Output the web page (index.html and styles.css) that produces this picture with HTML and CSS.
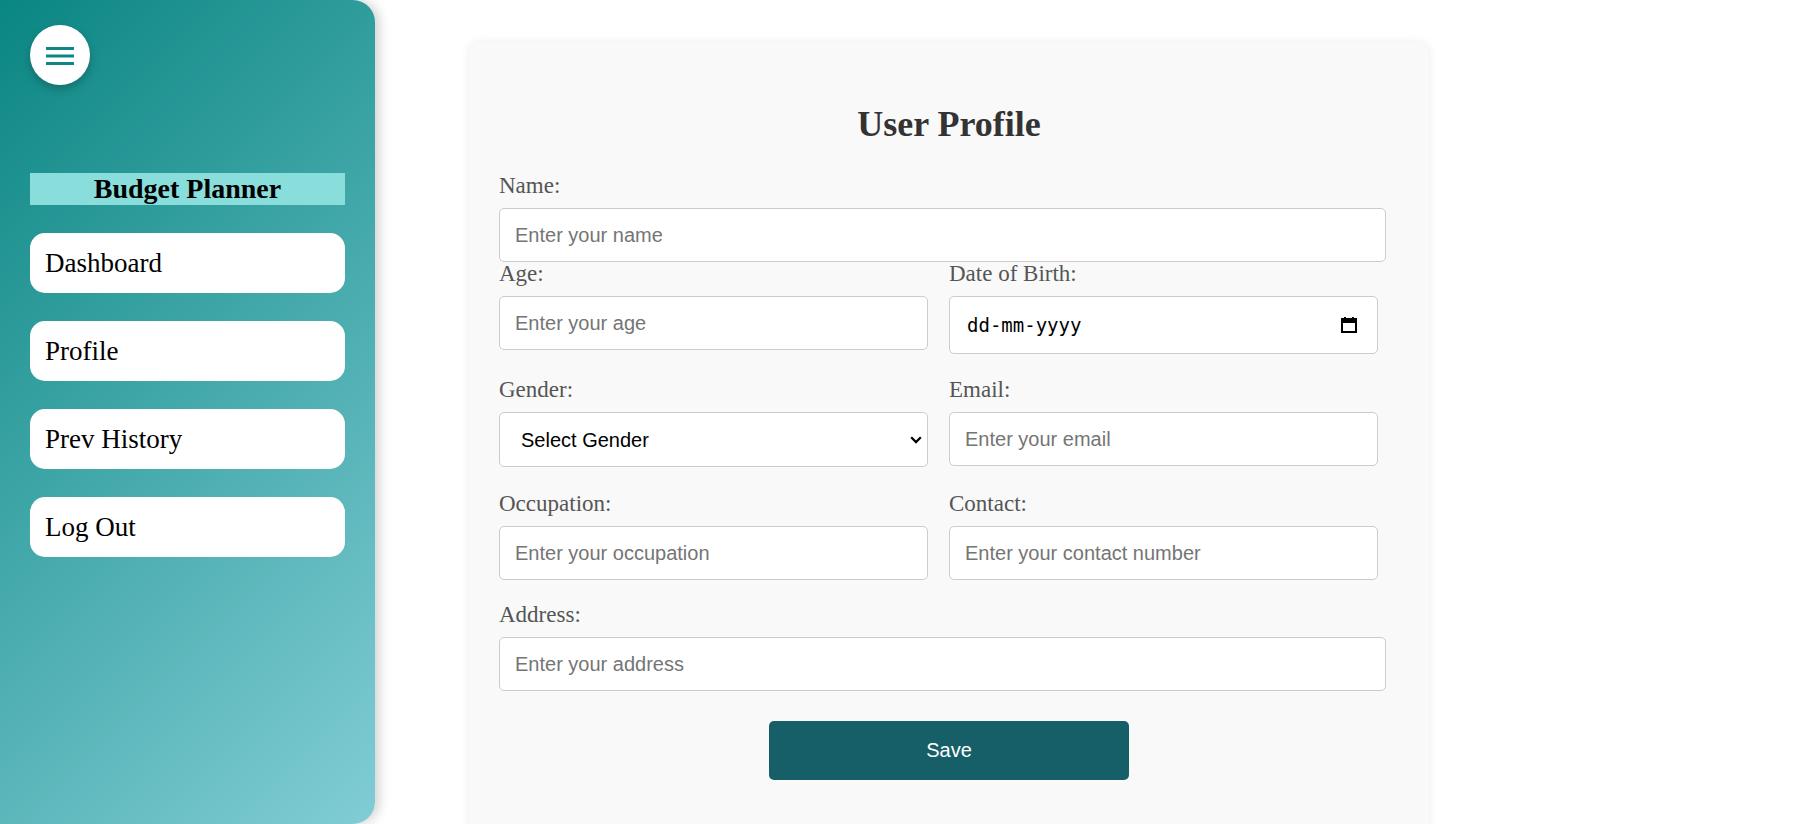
FILE: index.html
```html
<!DOCTYPE html>
<html lang="en">
<head>
<meta charset="utf-8">
<title>User Profile - Budget Planner</title>
<link rel="stylesheet" href="styles.css">
</head>
<body>
<div class="app">
  <aside class="sidebar">
    <button class="menu-btn" type="button" aria-label="Menu">
      <svg width="28" height="18" viewBox="0 0 28 18" aria-hidden="true">
        <rect x="0" y="0" width="28" height="3" fill="#0e8784"/>
        <rect x="0" y="7.5" width="28" height="3" fill="#0e8784"/>
        <rect x="0" y="15" width="28" height="3" fill="#0e8784"/>
      </svg>
    </button>
    <h2 class="brand">Budget Planner</h2>
    <nav class="nav">
      <a class="nav-item" href="#">Dashboard</a>
      <a class="nav-item" href="#">Profile</a>
      <a class="nav-item" href="#">Prev History</a>
      <a class="nav-item" href="#">Log Out</a>
    </nav>
  </aside>
  <main class="main">
    <section class="card">
      <h1 class="title">User Profile</h1>
      <form class="form">
        <div class="group group-name">
          <label class="label" for="name">Name:</label>
          <input class="field field-wide" id="name" type="text" placeholder="Enter your name">
        </div>
        <div class="row row-2">
          <div class="group">
            <label class="label" for="age">Age:</label>
            <input class="field" id="age" type="text" placeholder="Enter your age">
          </div>
          <div class="group">
            <label class="label" for="dob">Date of Birth:</label>
            <div class="control">
              <input class="field field-date" id="dob" type="text" placeholder="dd-mm-yyyy">
              <svg class="cal-icon" width="16" height="17" viewBox="0 0 16 17" aria-hidden="true">
                <rect x="1" y="3" width="14" height="13" fill="none" stroke="#000" stroke-width="2"/>
                <rect x="1" y="3" width="14" height="4" fill="#000"/>
                <rect x="3" y="1" width="2" height="3" fill="#000"/>
                <rect x="11" y="1" width="2" height="3" fill="#000"/>
              </svg>
            </div>
          </div>
        </div>
        <div class="row row-3">
          <div class="group">
            <label class="label" for="gender">Gender:</label>
            <div class="control">
              <select class="field field-select" id="gender">
                <option>Select Gender</option>
                <option>Male</option>
                <option>Female</option>
                <option>Other</option>
              </select>
              <svg class="chevron" width="12" height="8" viewBox="0 0 12 8" aria-hidden="true">
                <path d="M1.2 1.3 L6 6.1 L10.8 1.3" fill="none" stroke="#000" stroke-width="2.2"/>
              </svg>
            </div>
          </div>
          <div class="group">
            <label class="label" for="email">Email:</label>
            <input class="field" id="email" type="email" placeholder="Enter your email">
          </div>
        </div>
        <div class="row row-4">
          <div class="group">
            <label class="label" for="occ">Occupation:</label>
            <input class="field" id="occ" type="text" placeholder="Enter your occupation">
          </div>
          <div class="group">
            <label class="label" for="contact">Contact:</label>
            <input class="field" id="contact" type="text" placeholder="Enter your contact number">
          </div>
        </div>
        <div class="group group-address">
          <label class="label" for="address">Address:</label>
          <input class="field field-wide" id="address" type="text" placeholder="Enter your address">
        </div>
        <button class="save-btn" type="button">Save</button>
      </form>
    </section>
  </main>
</div>
</body>
</html>
```
FILE: styles.css
```css
* {
  box-sizing: border-box;
}

html, body {
  margin: 0;
  padding: 0;
  background: #ffffff;
}

body {
  font-family: "Liberation Serif", "Times New Roman", serif;
}

.app {
  display: flex;
  height: 100vh;
  overflow: hidden;
}

/* Sidebar */
.sidebar {
  flex: 0 0 375px;
  width: 375px;
  height: 100vh;
  padding: 25px 30px;
  background: linear-gradient(135deg, #0a8682 0%, #81cdd5 100%);
  border-radius: 0 22px 22px 0;
  box-shadow: 4px 0 12px rgba(0, 0, 0, 0.18);
  display: flex;
  flex-direction: column;
  position: relative;
  z-index: 1;
}

.menu-btn {
  width: 60px;
  height: 60px;
  border: none;
  border-radius: 50%;
  background: #ffffff;
  box-shadow: 0 4px 8px rgba(0, 0, 0, 0.22);
  display: flex;
  align-items: center;
  justify-content: center;
  padding: 0;
  cursor: pointer;
}

.menu-btn svg {
  display: block;
  margin-top: 1px;
}

.brand {
  margin: 88px 0 28px;
  background: #89dedc;
  font-size: 28px;
  font-weight: bold;
  text-align: center;
  color: #000;
  line-height: 32px;
  height: 32px;
}

.nav {
  display: flex;
  flex-direction: column;
  gap: 28px;
}

.nav-item {
  display: block;
  height: 60px;
  background: #ffffff;
  border-radius: 15px;
  padding: 15px 15px 0;
  font-size: 27px;
  color: #000;
  text-decoration: none;
  line-height: 31px;
}

/* Main */
.main {
  flex: 1;
  padding: 42px 0 0 94px;
  overflow: hidden;
}

.card {
  width: 960px;
  background: #f9f9f9;
  border-radius: 10px;
  box-shadow: 0 0 10px rgba(0, 0, 0, 0.08);
  padding: 30px 30px 80px;
}

.title {
  margin: 31px 0 28px;
  font-size: 36px;
  font-weight: bold;
  text-align: center;
  color: #333;
  line-height: normal;
}

.form {
  display: flex;
  flex-direction: column;
}

.label {
  display: block;
  font-size: 23px;
  color: #555;
  margin-bottom: 9px;
  line-height: normal;
}

.group-name {
  margin-bottom: -1px;
}

.row {
  display: grid;
  grid-template-columns: 429px 429px;
  column-gap: 21px;
  align-items: start;
  margin-bottom: 22px;
}

.row-2 {
  margin-bottom: 23px;
}

.row-3 {
  margin-bottom: 24px;
}

.control {
  position: relative;
}

.field {
  display: block;
  width: 100%;
  height: 54px;
  padding: 0 15px;
  border: 1px solid #cccccc;
  border-radius: 5px;
  background: #ffffff;
  font-family: "Liberation Sans", Arial, sans-serif;
  font-size: 20px;
  color: #000;
  outline: none;
}

.field::placeholder {
  color: #757575;
}

.field-wide {
  width: 887px;
}

.field-date {
  height: 58px;
  font-family: "DejaVu Sans Mono", "Liberation Mono", monospace;
  font-size: 19px;
  padding: 0 50px 0 17px;
}

.field-date::placeholder {
  color: #000;
}

.cal-icon {
  position: absolute;
  right: 21px;
  top: 20px;
  pointer-events: none;
}

.field-select {
  height: 55px;
  padding: 0 30px 0 21px;
  appearance: none;
  -webkit-appearance: none;
}

.chevron {
  position: absolute;
  right: 6px;
  top: 24px;
  pointer-events: none;
}

.group-address {
  margin-bottom: 30px;
}

.save-btn {
  display: block;
  align-self: center;
  width: 360px;
  height: 59px;
  border: none;
  border-radius: 5px;
  background: #165f69;
  color: #ffffff;
  font-family: "Liberation Sans", Arial, sans-serif;
  font-size: 20px;
  cursor: pointer;
}
```
